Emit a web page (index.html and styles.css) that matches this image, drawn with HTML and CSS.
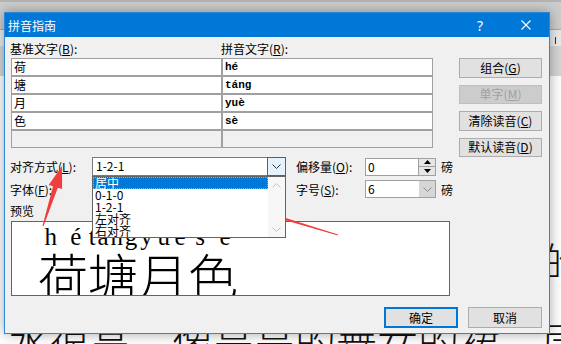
FILE: index.html
```html
<!DOCTYPE html>
<html lang="zh-CN">
<head>
    <meta charset="UTF-8">
    <title>拼音指南</title>
    <link rel="stylesheet" href="styles.css">
</head>
<body>
    <div class="desk">
        <div class="ribbon"></div>
        <div class="ruler"><span class="ruler-mark"></span></div>
        <div class="gutter"></div>
        <div class="doc">
            <p class="doc-line">折的荷塘上面，弥望的是田田的叶子</p>
            <p class="doc-line">水很高，像亭亭的舞女的裙。层层</p>
        </div>

        <div class="dialog">
            <div class="titlebar">
                <span class="title">拼音指南</span>
                <span class="tb-btn tb-help">?</span>
                <span class="tb-btn">
                    <svg width="10" height="10" viewBox="0 0 10 10"><path d="M0.5 0.5 L9.5 9.5 M9.5 0.5 L0.5 9.5" stroke="#fff" stroke-width="1.1" fill="none"/></svg>
                </span>
            </div>

            <div class="body">
                <div class="top">
                    <div class="ruby-table">
                        <div class="col-label">基准文字(<u>B</u>):</div>
                        <div class="col-label">拼音文字(<u>R</u>):</div>
                        <div class="cell base">荷</div><div class="cell py">hé</div>
                        <div class="cell base">塘</div><div class="cell py">táng</div>
                        <div class="cell base">月</div><div class="cell py">yuè</div>
                        <div class="cell base">色</div><div class="cell py">sè</div>
                        <div class="cell off"></div><div class="cell off"></div>
                    </div>
                    <div class="side">
                        <button class="btn">组合(<u>G</u>)</button>
                        <button class="btn disabled">单字(<u>M</u>)</button>
                        <button class="btn">清除读音(<u>C</u>)</button>
                        <button class="btn">默认读音(<u>D</u>)</button>
                    </div>
                </div>

                <div class="row row-align">
                    <span class="label-l">对齐方式(<u>L</u>):</span>
                    <div class="combo wide">
                        <span class="combo-text">1-2-1</span>
                        <span class="combo-btn hot">
                            <svg width="9" height="5" viewBox="0 0 9 5"><path d="M0.5 0.5 L4.5 4.5 L8.5 0.5" stroke="#333" fill="none"/></svg>
                        </span>
                        <div class="droplist">
                            <div class="items">
                                <div class="item selected">居中</div>
                                <div class="item">0-1-0</div>
                                <div class="item">1-2-1</div>
                                <div class="item">左对齐</div>
                                <div class="item">右对齐</div>
                            </div>
                            <div class="scroll">
                                <svg width="9" height="5" viewBox="0 0 9 5"><path d="M0.5 4.5 L4.5 0.5 L8.5 4.5" stroke="#c2c2c2" fill="none"/></svg>
                                <svg width="9" height="5" viewBox="0 0 9 5"><path d="M0.5 0.5 L4.5 4.5 L8.5 0.5" stroke="#c2c2c2" fill="none"/></svg>
                            </div>
                        </div>
                    </div>
                    <span class="label-r">偏移量(<u>O</u>):</span>
                    <div class="spin">
                        <span class="combo-text">0</span>
                        <span class="spin-btns">
                            <span class="spin-half"><svg width="7" height="4" viewBox="0 0 7 4"><path d="M0 4 L3.5 0 L7 4 Z" fill="#000"/></svg></span>
                            <span class="spin-half"><svg width="7" height="4" viewBox="0 0 7 4"><path d="M0 0 L3.5 4 L7 0 Z" fill="#000"/></svg></span>
                        </span>
                    </div>
                    <span class="unit">磅</span>
                </div>

                <div class="row row-font">
                    <span class="label-l">字体(<u>F</u>):</span>
                    <div class="combo wide"></div>
                    <span class="label-r">字号(<u>S</u>):</span>
                    <div class="combo small">
                        <span class="combo-text">6</span>
                        <span class="combo-btn grey">
                            <svg width="9" height="5" viewBox="0 0 9 5"><path d="M0.5 0.5 L4.5 4.5 L8.5 0.5" stroke="#888" fill="none"/></svg>
                        </span>
                    </div>
                    <span class="unit">磅</span>
                </div>

                <div class="preview-label">预览</div>
                <div class="preview">
                    <div class="py-row">
                        <span class="py-char"><span>h</span><span>é</span></span>
                        <span class="py-char"><span>t</span><span>á</span><span>n</span><span>g</span></span>
                        <span class="py-char"><span>y</span><span>u</span><span>è</span></span>
                        <span class="py-char"><span>s</span><span>è</span></span>
                    </div>
                    <div class="hz-row">荷塘月色</div>
                </div>

                <div class="footer">
                    <button class="btn big default">确定</button>
                    <button class="btn big">取消</button>
                </div>
            </div>
        </div>

        <!-- red annotation arrows -->
        <svg class="arrows" width="561" height="344" viewBox="0 0 561 344">
            <polygon fill="#f03e3e" points="62,166 62.1,189.1 57.8,187.8 43.5,226.2 42.5,225.8 53,186.2 48.7,184.9"/>
            <polygon fill="#f03e3e" points="163,182 188.3,181.3 186.7,186.6 338.1,234.5 337.9,235.5 185.3,191.4 183.7,196.7"/>
        </svg>
    </div>
</body>
</html>
```

FILE: styles.css
```css
body {
    margin: 0;
    width: 561px;
    height: 344px;
    overflow: hidden;
    background: #fff;
    font-family: "Noto Sans CJK SC", sans-serif;
}

.desk {
    position: relative;
    width: 561px;
    height: 344px;
    overflow: hidden;
}

.ribbon {
    height: 27px;
    background: #cdcdcd;
    border-top: 2px solid #b4b4b4;
    border-bottom: 1px solid #a8a8a8;
}

.ruler {
    position: relative;
    height: 16px;
    background: #ebebeb;
}

.ruler-mark {
    position: absolute;
    left: 555px;
    top: 7px;
    width: 1px;
    height: 7px;
    background: #333;
}

.gutter {
    height: 30px;
    background: #d6d6d6;
}

.doc {
    padding-top: 144px;
}

.doc-line {
    margin: 0;
    padding-left: 8px;
    white-space: nowrap;
    font-size: 41px;
    font-weight: 300;
    line-height: 80px;
    color: #111;
}

/* dialog window */
.dialog {
    position: absolute;
    left: 4px;
    top: 12px;
    width: 544px;
    height: 320px;
    border: 1px solid #2b88d8;
    background: #f0f0f0;
    box-shadow: 0 0 12px rgba(0, 0, 0, 0.35);
    font-size: 12px;
    color: #000;
}

.titlebar {
    display: flex;
    align-items: center;
    height: 24px;
    background: #0078d7;
    color: #fff;
}

.title {
    padding-left: 3px;
    flex: 1;
    font-size: 12px;
}

.tb-btn {
    display: flex;
    align-items: center;
    justify-content: center;
    width: 46px;
    height: 24px;
}

.tb-help {
    font-family: "Noto Sans", sans-serif;
    font-size: 14px;
}

.body {
    padding: 4px 0 0 5px;
}

u {
    text-underline-offset: 1px;
}

.top {
    display: flex;
    height: 116px;
}

.ruby-table {
    display: grid;
    grid-template-columns: 211px 211px;
    grid-template-rows: 17px repeat(5, 18px);
    margin-left: 1px;
    align-self: flex-start;
}

.col-label {
    margin-left: -1px;
    line-height: 16px;
}

.cell {
    box-sizing: border-box;
    border: 1px solid #a0a0a0;
    background: #fff;
    padding-left: 2px;
    line-height: 16px;
}

.cell.py {
    font-family: "Liberation Mono", monospace;
    font-size: 11px;
    font-weight: bold;
}

.cell.off {
    background: #f0f0f0;
}

.side {
    display: flex;
    flex-direction: column;
    gap: 7px;
    margin: 17px 0 0 26px;
}

.btn {
    box-sizing: border-box;
    width: 83px;
    height: 20px;
    padding: 0;
    border: 1px solid #adadad;
    background: #e1e1e1;
    font-family: "Noto Sans CJK SC", sans-serif;
    font-size: 12px;
    line-height: 16px;
    color: #000;
}

.btn.disabled {
    background: #cccccc;
    border-color: #bfbfbf;
    color: #a0a0a0;
}

.row {
    display: flex;
    align-items: center;
}

.row-align {
    height: 19px;
}

.row-font {
    height: 18px;
    margin-top: 4px;
}

.label-l {
    width: 82px;
}

.label-r {
    width: 69px;
    margin-left: 10px;
}

.unit {
    margin-left: 5px;
}

.combo,
.spin {
    position: relative;
    box-sizing: border-box;
    display: flex;
    border: 1px solid #7a7a7a;
    background: #fff;
}

.combo.wide {
    width: 194px;
    height: 19px;
}

.combo.small {
    width: 71px;
    height: 18px;
    border-color: #a0a0a0;
}

.combo-text {
    flex: 1;
    padding-left: 2px;
    line-height: 16px;
}

.combo.wide .combo-text {
    padding-left: 3px;
}

.combo-btn {
    display: flex;
    align-items: center;
    justify-content: center;
    width: 16px;
}

.combo-btn.hot {
    width: 17px;
    margin: -1px -1px -1px 0;
    border: 1px solid #0078d7;
    background: #e5f1fb;
}

.combo-btn.grey {
    background: #d6d6d6;
}

.droplist {
    position: absolute;
    left: -1px;
    top: 18px;
    box-sizing: border-box;
    display: flex;
    width: 194px;
    height: 62px;
    border: 1px solid #646464;
    background: #fff;
    z-index: 2;
}

.items {
    flex: 1;
    overflow: hidden;
}

.item {
    height: 12px;
    padding-left: 2px;
    line-height: 12px;
}

.item.selected {
    background: #0078d7;
    color: #fff;
    outline: 1px dotted #f0a030;
    outline-offset: -1px;
}

.scroll {
    display: flex;
    flex-direction: column;
    justify-content: space-between;
    align-items: center;
    width: 17px;
    padding: 6px 0 5px;
    box-sizing: border-box;
    background: #f7f7f7;
}

.spin {
    width: 71px;
    height: 18px;
    border-color: #a0a0a0;
}

.spin-btns {
    display: flex;
    flex-direction: column;
    width: 16px;
    border-left: 1px solid #a0a0a0;
}

.spin-half {
    flex: 1;
    display: flex;
    align-items: center;
    justify-content: center;
    background: #e6e6e6;
}

.spin-half + .spin-half {
    border-top: 1px solid #a0a0a0;
}

.preview-label {
    margin-top: 5px;
    line-height: 16px;
}

.preview {
    box-sizing: border-box;
    width: 439px;
    height: 75px;
    margin: 2px 0 0 1px;
    padding-left: 26px;
    border: 1px solid #646464;
    background: #fff;
    overflow: hidden;
}

.py-row {
    display: flex;
    height: 26px;
    margin-top: 2px;
    font-family: "Liberation Serif", serif;
    font-size: 25px;
    line-height: 26px;
}

.py-char {
    display: flex;
    justify-content: space-around;
    width: 50px;
}

.hz-row {
    margin-top: -1px;
    font-size: 50px;
    font-weight: 300;
    line-height: 50px;
    white-space: nowrap;
}

.footer {
    display: flex;
    justify-content: flex-end;
    gap: 10px;
    margin-top: 11px;
    padding-right: 7px;
}

.btn.big {
    width: 74px;
    height: 21px;
}

.btn.default {
    border: 2px solid #0078d7;
}

.arrows {
    position: absolute;
    left: 0;
    top: 0;
    pointer-events: none;
}
```
